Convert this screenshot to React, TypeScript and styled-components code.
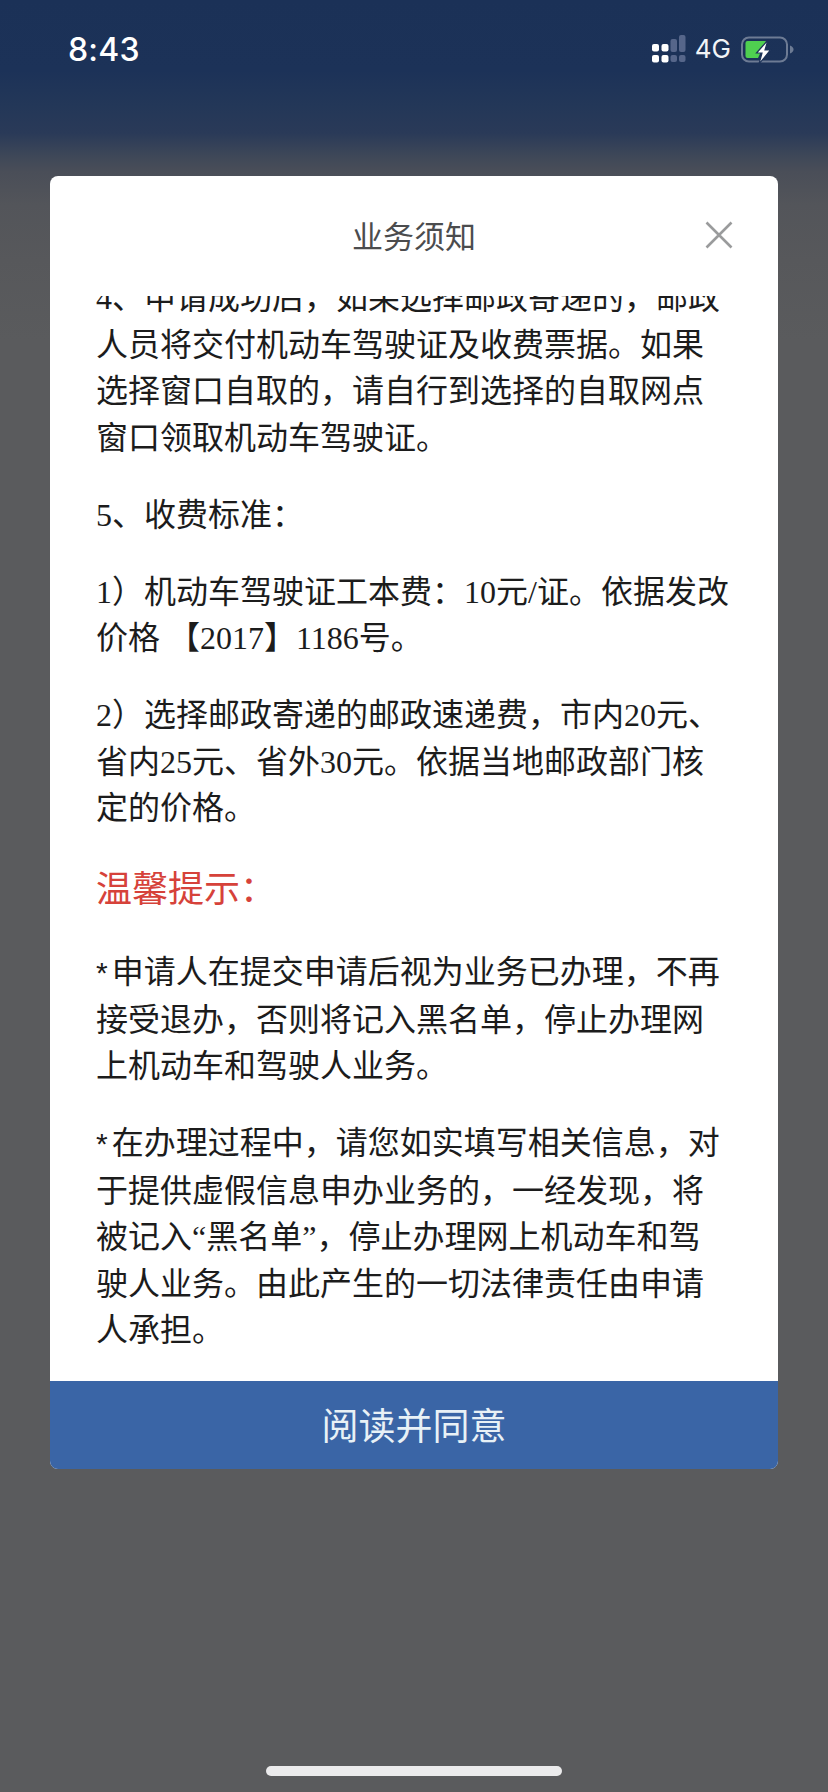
import React from "react";
import styled, { createGlobalStyle } from "styled-components";

const Global = createGlobalStyle`
  html, body { margin: 0; padding: 0; background: #595a5c; }
  #root { width: 828px; height: 1792px; overflow: hidden; }
`;

const Page = styled.div`
  position: relative;
  width: 828px;
  height: 1792px;
  display: flex;
  flex-direction: column;
  background: linear-gradient(
    180deg,
    #1b3157 0px,
    #1c3258 70px,
    #233758 105px,
    #2a3a58 133px,
    #3f4858 157px,
    #4a4e58 172px,
    #53555a 205px,
    #57585b 260px,
    #5a5b5d 340px,
    #5a5b5d 100%
  );
  font-family: "Liberation Serif", "Noto Sans CJK SC", serif;
`;

const StatusBar = styled.div`
  height: 176px;
  box-sizing: border-box;
  padding: 29px 34px 0 68px;
  display: flex;
  justify-content: space-between;
  align-items: flex-start;
  color: #fff;
  font-family: Inter, "Liberation Sans", sans-serif;
`;

const Time = styled.div`
  margin-top: 1px;
  font-size: 32px;
  line-height: 40px;
  font-weight: 500;
  letter-spacing: 0.2px;
`;

const StatusRight = styled.div`
  display: flex;
  align-items: center;
  height: 40px;
`;

const NetworkLabel = styled.span`
  font-size: 26px;
  line-height: 40px;
  font-weight: 400;
  margin: 0 10px 0 9px;
  color: #f2f4f7;
`;

const Card = styled.div`
  width: 728px;
  height: 1293px;
  margin-left: 50px;
  border-radius: 8px;
  background: #fff;
  display: flex;
  flex-direction: column;
  overflow: hidden;
`;

const CardHeader = styled.div`
  position: relative;
  height: 120px;
  flex: none;
  display: flex;
  align-items: center;
  justify-content: center;
`;

const Title = styled.h1`
  margin: -3px 0 0;
  font: 400 31px/40px "Noto Sans CJK SC", sans-serif;
  color: #4b4c4e;
`;

const CloseButton = styled.div`
  position: absolute;
  right: 45px;
  top: 45px;
  width: 28px;
  height: 28px;
  line-height: 0;
`;

const Body = styled.div`
  flex: 1;
  min-height: 0;
  overflow: hidden;
  padding: 0 44px 0 46px;
`;

const Content = styled.div`
  margin-top: -21px;
`;

const Paragraph = styled.p`
  margin: 0 0 30.5px;
  font-size: 32px;
  line-height: 46.5px;
  font-weight: 400;
  color: #1c1c1c;
`;

const Asterisk = styled.span`
  font-family: "Liberation Sans", sans-serif;
  font-size: 30px;
  letter-spacing: 4px;
`;

const Notice = styled.h2`
  margin: 1px 0 31px;
  font: 400 36px/56px "Liberation Serif", "Noto Sans CJK SC", sans-serif;
  color: #d6423a;
`;

const AgreeButton = styled.div`
  height: 88px;
  flex: none;
  background: #3a65a6;
  color: #e8f1f6;
  display: flex;
  align-items: center;
  justify-content: center;
  padding-bottom: 3px;
  box-sizing: border-box;
  font: 400 37px/44px "Noto Sans CJK SC", sans-serif;
`;

const HomeBar = styled.div`
  position: absolute;
  left: 266px;
  top: 1766px;
  width: 296px;
  height: 10px;
  border-radius: 5px;
  background: #ebebec;
`;

const SignalIcon = () => (
  <svg width="34" height="28" viewBox="0 0 34 28">
    <rect x="0" y="9" width="7" height="7.5" rx="2" fill="#fff" />
    <rect x="9.5" y="9" width="7" height="7.5" rx="2" fill="#fff" />
    <rect x="0" y="20" width="7" height="7.5" rx="2" fill="#fff" />
    <rect x="9.5" y="20" width="7" height="7.5" rx="2" fill="#fff" />
    <rect x="18.5" y="4" width="6.5" height="13" rx="2" fill="#56668a" />
    <rect x="27" y="0" width="6.5" height="17" rx="2" fill="#56668a" />
    <rect x="18.5" y="20" width="6.5" height="7" rx="2" fill="#56668a" />
    <rect x="27" y="20" width="6.5" height="7" rx="2" fill="#56668a" />
  </svg>
);

const BatteryIcon = () => (
  <svg width="53" height="28" viewBox="0 0 53 28">
    <rect x="1" y="2.5" width="45" height="24" rx="7" fill="none" stroke="#6d7b94" strokeWidth="2" />
    <path d="M49 10.5 Q52.5 12 52.5 14.5 Q52.5 17 49 18.5 Z" fill="#6d7b94" />
    <path d="M6.5 6 H25 L17 23 H6.5 Q4.5 23 4.5 21 V8 Q4.5 6 6.5 6 Z" fill="#4fd050" />
    <path d="M27 5 L15.5 18 H21 L18 29 L29.5 15 H24 Z" fill="#fff" stroke="#1c3258" strokeWidth="1.2" />
  </svg>
);

export default function App() {
  return (
    <Page>
      <Global />
      <StatusBar>
        <Time>8:43</Time>
        <StatusRight>
          <SignalIcon />
          <NetworkLabel>4G</NetworkLabel>
          <BatteryIcon />
        </StatusRight>
      </StatusBar>
      <Card>
        <CardHeader>
          <Title>业务须知</Title>
          <CloseButton>
            <svg width="28" height="28" viewBox="0 0 28 28">
              <path d="M1.5 1.5 L26.5 26.5 M26.5 1.5 L1.5 26.5" stroke="#9a9b9c" strokeWidth="2.6" fill="none" />
            </svg>
          </CloseButton>
        </CardHeader>
        <Body>
          <Content>
            <Paragraph>
              4、申请成功后，如果选择邮政寄递的，邮政<br />
              人员将交付机动车驾驶证及收费票据。如果<br />
              选择窗口自取的，请自行到选择的自取网点<br />
              窗口领取机动车驾驶证。
            </Paragraph>
            <Paragraph>5、收费标准：</Paragraph>
            <Paragraph>
              1）机动车驾驶证工本费：10元/证。依据发改<br />
              价格 【2017】1186号。
            </Paragraph>
            <Paragraph>
              2）选择邮政寄递的邮政速递费，市内20元、<br />
              省内25元、省外30元。依据当地邮政部门核<br />
              定的价格。
            </Paragraph>
            <Notice>温馨提示：</Notice>
            <Paragraph>
              <Asterisk>*</Asterisk>申请人在提交申请后视为业务已办理，不再<br />
              接受退办，否则将记入黑名单，停止办理网<br />
              上机动车和驾驶人业务。
            </Paragraph>
            <Paragraph>
              <Asterisk>*</Asterisk>在办理过程中，请您如实填写相关信息，对<br />
              于提供虚假信息申办业务的，一经发现，将<br />
              被记入“黑名单”，停止办理网上机动车和驾<br />
              驶人业务。由此产生的一切法律责任由申请<br />
              人承担。
            </Paragraph>
          </Content>
        </Body>
        <AgreeButton>阅读并同意</AgreeButton>
      </Card>
      <HomeBar />
    </Page>
  );
}
